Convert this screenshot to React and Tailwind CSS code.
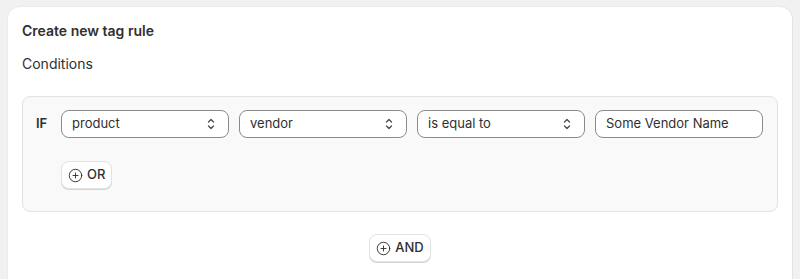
import { CirclePlus } from 'lucide-react'

function Chevrons() {
  return (
    <svg width="10" height="14" viewBox="0 0 10 14" fill="none" stroke="#4a4a4a" strokeWidth="1.3" strokeLinecap="round" strokeLinejoin="round">
      <path d="M2.5 5 L5 2.5 L7.5 5" />
      <path d="M2.5 9 L5 11.5 L7.5 9" />
    </svg>
  )
}

function Select({ value }) {
  return (
    <div className="flex h-[28px] w-[168px] items-center justify-between rounded-lg border border-[#8a8a8a] bg-white pl-[10px] pr-[12px] text-[13px] text-[#303030]">
      <span>{value}</span>
      <Chevrons />
    </div>
  )
}

function PlusButton({ label }) {
  return (
    <button className="flex h-[28px] items-center gap-[4px] rounded-lg border border-[#e3e3e3] bg-white px-[6px] text-[13px] font-medium text-[#303030] shadow-[0_1px_0_#d4d4d4]">
      <CirclePlus className="h-[15px] w-[15px]" strokeWidth={1.5} />
      {label}
    </button>
  )
}

export default function App() {
  return (
    <div className="min-h-[279px] bg-[#f1f1f1] px-[8px] pt-[7px] font-['Inter',sans-serif] antialiased">
      <div className="h-[280px] rounded-t-xl bg-white px-[14px] pt-[14px] shadow-[1px_0_0_#e3e3e3,0_0_0_1px_#ebebeb]">
        <h2 className="text-[14px] font-semibold leading-5 text-[#303030]">Create new tag rule</h2>
        <h3 className="mt-[13px] text-[14px] leading-5 text-[#303030]">Conditions</h3>

        <div className="mt-[22px] rounded-lg border border-[#e3e3e3] bg-[#f9f9f9] pl-[13px] pr-[14px] pt-[13px] pb-[22px]">
          <div className="flex items-center">
            <span className="w-[25px] text-[13px] font-semibold text-[#303030]">IF</span>
            <div className="flex gap-[10px]">
              <Select value="product" />
              <Select value="vendor" />
              <Select value="is equal to" />
              <div className="flex h-[28px] w-[168px] items-center rounded-lg border border-[#8a8a8a] bg-white pl-[10px] text-[13px] text-[#303030]">
                Some Vendor Name
              </div>
            </div>
          </div>
          <div className="mt-[23px] pl-[25px]">
            <PlusButton label="OR" />
          </div>
        </div>

        <div className="mt-[22px] flex justify-center">
          <PlusButton label="AND" />
        </div>
      </div>
    </div>
  )
}
